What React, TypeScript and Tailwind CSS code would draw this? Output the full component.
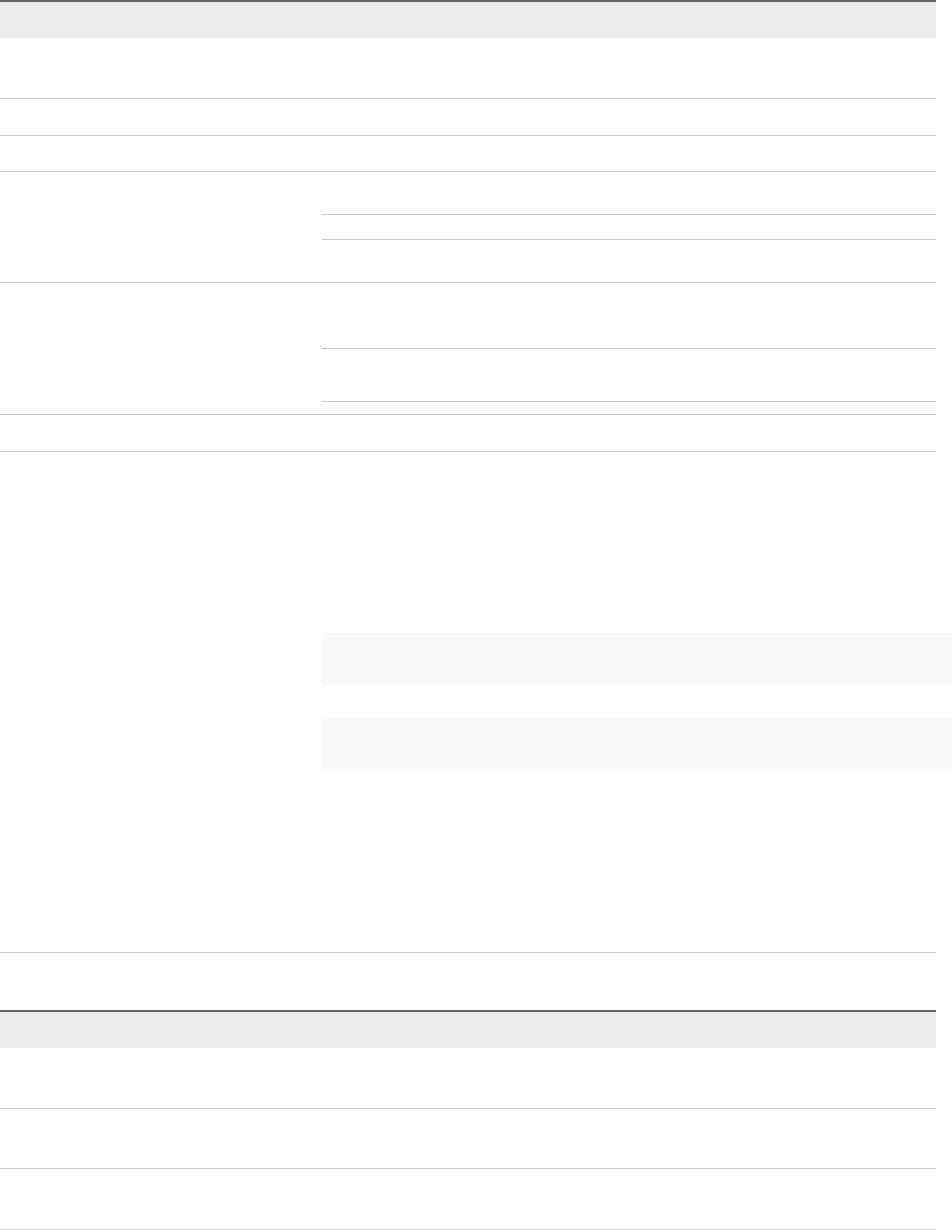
const line = 'border-b border-[#c8c8c8]';

function Header() {
  return <div className="h-[36px] bg-[#ececec]" />;
}

function Row({ h }: { h: string }) {
  return <div className={`${h} ${line}`} />;
}

export default function App() {
  return (
    <div className="min-h-[1230px] bg-white font-['Liberation_Sans',sans-serif] text-sm text-[#333]">
      <div className="w-[936px] border-t-2 border-[#666666]">
        <Header />
        <Row h="h-[61px]" />
        <Row h="h-[37px]" />
        <Row h="h-[36px]" />

        <div className={`grid grid-cols-[322px_1fr] ${line}`}>
          <div />
          <div>
            <div className={`h-[43px] ${line}`} />
            <div className={`h-[25px] ${line}`} />
            <div className="h-[42px]" />
          </div>
        </div>

        <div className={`grid grid-cols-[322px_1fr] ${line}`}>
          <div />
          <div className="pb-[12px]">
            <div className={`h-[66px] ${line}`} />
            <div className={`h-[53px] ${line}`} />
          </div>
        </div>

        <Row h="h-[37px]" />

        <div className={`grid grid-cols-[322px_1fr] ${line}`}>
          <div />
          <div className="flex flex-col pt-[181px] pb-[183px]">
            <pre className="h-[52px] w-[630px] bg-[#f8f8f8]" />
            <pre className="mt-[32px] h-[52px] w-[630px] bg-[#f8f8f8]" />
          </div>
        </div>
      </div>

      <div className="mt-[57px] w-[936px] border-t-2 border-[#666666]">
        <Header />
        <Row h="h-[61px]" />
        <Row h="h-[60px]" />
        <Row h="h-[61px]" />
      </div>
    </div>
  );
}
